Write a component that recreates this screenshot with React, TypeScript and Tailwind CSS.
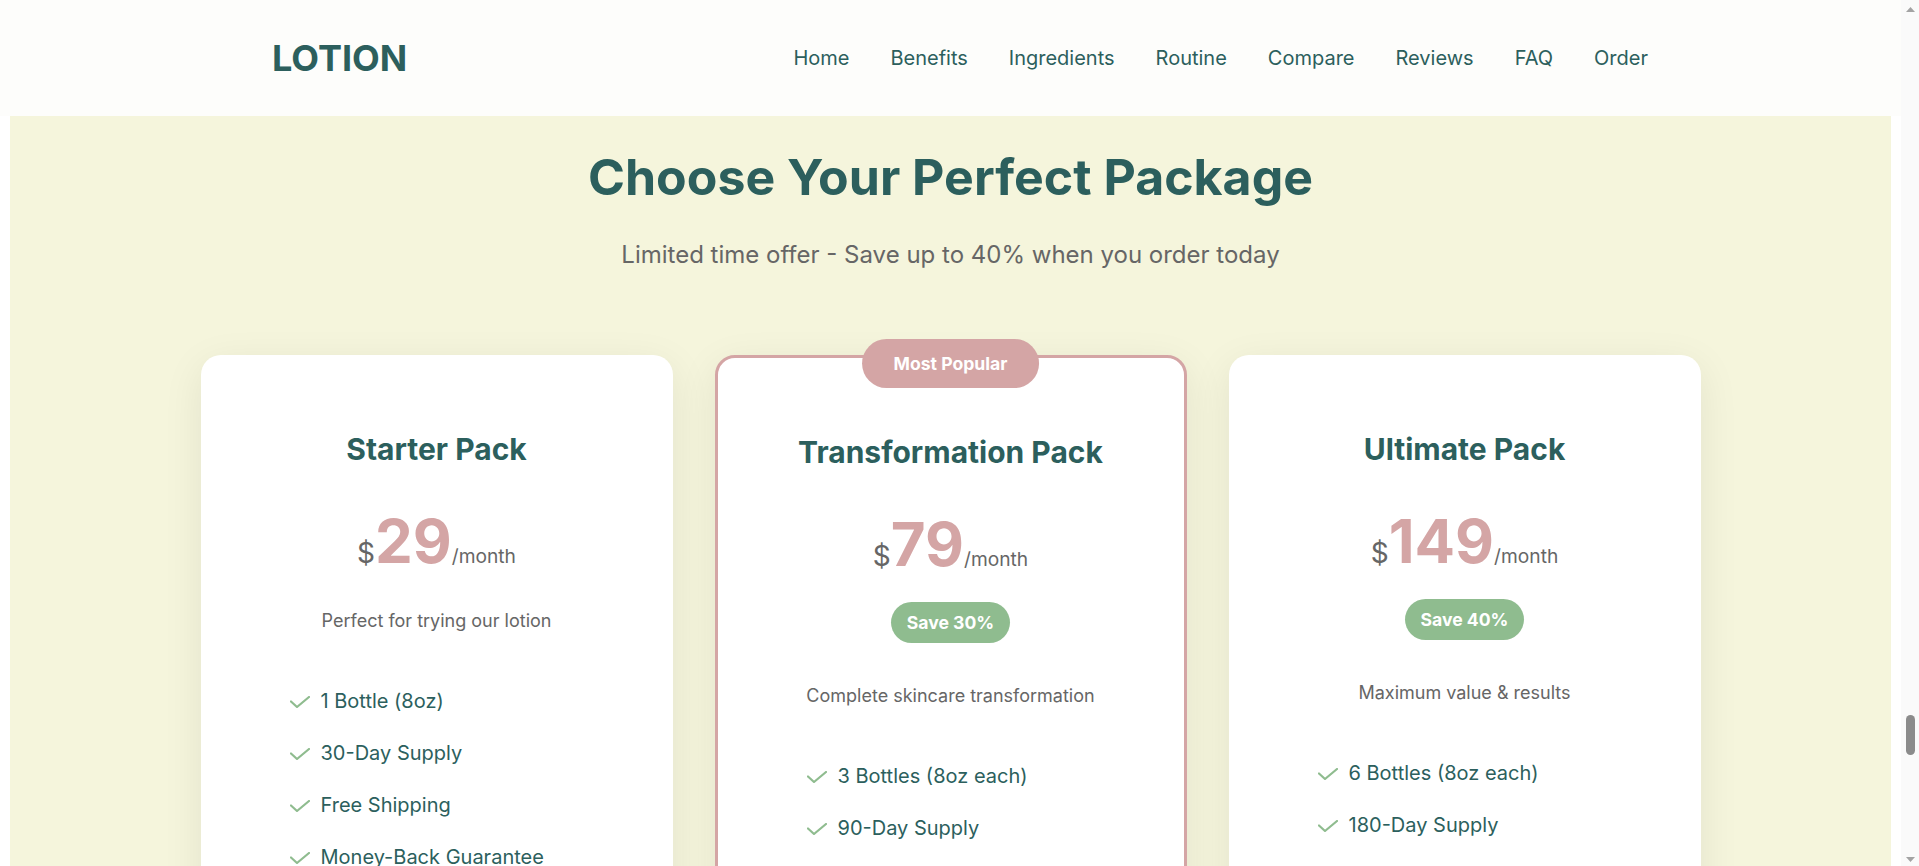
import clsx from "clsx";

type Plan = {
  name: string;
  price: string;
  save?: string;
  desc: string;
  popular?: boolean;
  features: string[];
};

const plans: Plan[] = [
  {
    name: "Starter Pack",
    price: "29",
    desc: "Perfect for trying our lotion",
    features: ["1 Bottle (8oz)", "30-Day Supply", "Free Shipping", "Money-Back Guarantee"],
  },
  {
    name: "Transformation Pack",
    price: "79",
    save: "Save 30%",
    desc: "Complete skincare transformation",
    popular: true,
    features: ["3 Bottles (8oz each)", "90-Day Supply", "Free Shipping", "Bonus Face Serum", "Money-Back Guarantee"],
  },
  {
    name: "Ultimate Pack",
    price: "149",
    save: "Save 40%",
    desc: "Maximum value & results",
    features: ["6 Bottles (8oz each)", "180-Day Supply", "Free Express Shipping", "Bonus Face Serum", "Money-Back Guarantee"],
  },
];

const links = ["Home", "Benefits", "Ingredients", "Routine", "Compare", "Reviews", "FAQ", "Order"];

function Check() {
  return (
    <svg width="20" height="12" viewBox="0 0 20 12" className="mt-[9px] shrink-0" fill="none">
      <polyline points="1,5.5 7,11 19,1" stroke="#8fbc8f" strokeWidth="2.2" strokeLinecap="round" strokeLinejoin="round" />
    </svg>
  );
}

function PlanCard({ plan }: { plan: Plan }) {
  return (
    <div
      className={clsx(
        "relative rounded-[20px] bg-white px-10 pt-[76px] pb-12 text-center shadow-[0_10px_40px_rgba(0,0,0,0.08)]",
        plan.popular && "border-[3px] border-[#d4a5a5]"
      )}
    >
      {plan.popular && (
        <span className="absolute left-1/2 top-[-19px] -translate-x-1/2 whitespace-nowrap rounded-full bg-[#d4a5a5] px-8 py-3 text-[17.6px] leading-[25px] font-bold text-white">
          Most Popular
        </span>
      )}
      <h3 className="text-[30px] leading-[36px] font-bold text-[#2c5f5d]">{plan.name}</h3>
      <div className="mt-[44px] flex items-baseline justify-center leading-none">
        <span className="text-[28px] text-[#666]">$</span>
        <span className="text-[60px] font-bold text-[#d4a5a5]">{plan.price}</span>
        <span className="text-[19.2px] text-[#666]">/month</span>
      </div>
      {plan.save && (
        <div className="mt-[28px] pb-[3px]">
          <span className="inline-block rounded-full bg-[#8fbc8f] px-4 py-2 text-[17.6px] leading-[25px] font-bold text-white">
            {plan.save}
          </span>
        </div>
      )}
      <p className="mt-[38px] text-[18px] leading-[24px] text-[#666]">{plan.desc}</p>
      <ul className="mt-[42px] pl-[49px] text-left">
        {plan.features.map((f) => (
          <li key={f} className="flex items-start gap-[11px] py-3 text-[20px] leading-[28px] text-[#2c5f5d]">
            <Check />
            <span>{f}</span>
          </li>
        ))}
      </ul>
    </div>
  );
}

export default function App() {
  return (
    <div className="flex h-screen w-full overflow-hidden bg-white font-['Inter',sans-serif]">
      <div className="min-w-0 flex-1 overflow-hidden">
        <header className="flex h-[116px] items-center justify-between bg-[#fdfdfb] pl-[272px] pr-[253px]">
          <div className="text-[36px] leading-none font-bold text-[#2c5f5d]">LOTION</div>
          <nav className="flex gap-[41px] text-[20px] text-[#2c5f5d]">
            {links.map((l) => (
              <a key={l} href="#">
                {l}
              </a>
            ))}
          </nav>
        </header>
        <section className="mx-[10px] h-[800px] bg-[#f5f5dc] pt-[32px] text-center">
          <h2 className="text-[50px] leading-[58px] font-bold text-[#2c5f5d]">Choose Your Perfect Package</h2>
          <p className="mt-[32px] text-[24px] leading-[33px] text-[#666]">
            Limited time offer - Save up to 40% when you order today
          </p>
          <div className="mx-auto mt-[84px] grid w-[1500px] grid-cols-3 items-start gap-[42px]">
            {plans.map((p) => (
              <PlanCard key={p.name} plan={p} />
            ))}
          </div>
        </section>
      </div>
      <div className="flex w-[18px] shrink-0 flex-col items-center bg-[#fafafa]">
        <svg width="9" height="5" viewBox="0 0 9 5" className="mt-[7px]">
          <polygon points="4.5,0 9,5 0,5" fill="#a3a3a3" />
        </svg>
        <div className="mt-[703px] h-[40px] w-[9px] rounded-full bg-[#8b8b8b]" />
        <div className="flex-1" />
        <svg width="9" height="5" viewBox="0 0 9 5" className="mb-[4px]">
          <polygon points="0,0 9,0 4.5,5" fill="#a3a3a3" />
        </svg>
      </div>
    </div>
  );
}
